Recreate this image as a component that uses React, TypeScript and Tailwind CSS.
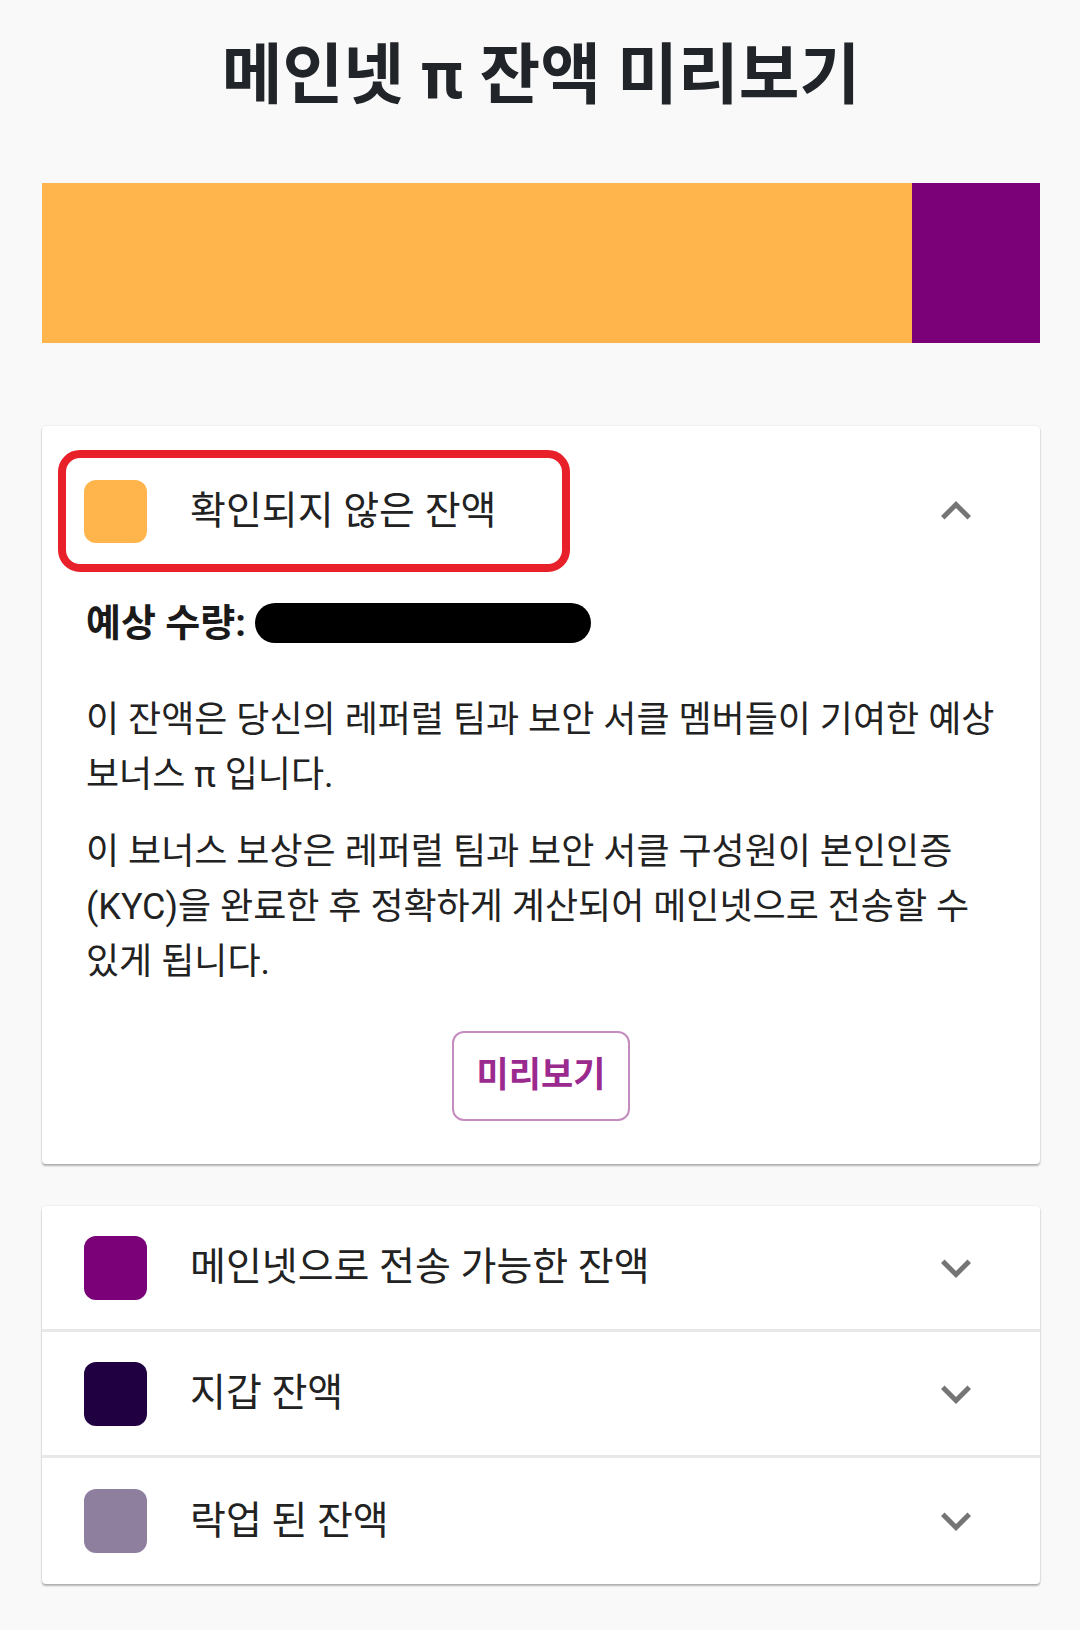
import React from 'react';

const font = { fontFamily: 'Roboto, "Noto Sans CJK KR", sans-serif' };

function ChevronUp() {
  return (
    <svg width="60" height="60" viewBox="0 0 24 24" className="text-[#757575]" fill="currentColor">
      <path d="M12 8l-6 6 1.41 1.41L12 10.83l4.59 4.58L18 14z" />
    </svg>
  );
}

function ChevronDown() {
  return (
    <svg width="60" height="60" viewBox="0 0 24 24" className="text-[#757575]" fill="currentColor">
      <path d="M16.59 8.59L12 13.17 7.41 8.59 6 10l6 6 6-6z" />
    </svg>
  );
}

const rows = [
  { label: '메인넷으로 전송 가능한 잔액', color: 'bg-[#7a0177]', h: 'h-[123px]' },
  { label: '지갑 잔액', color: 'bg-[#200040]', h: 'h-[123px]' },
  { label: '락업 된 잔액', color: 'bg-[#8f7f9f]', h: 'h-[126px]' },
];

export default function App() {
  return (
    <div className="min-h-[1630px] bg-[#f9f9f9] text-[#212121]" style={font}>
      <div className="pl-[42px] pr-[40px] pt-[31px]">
        <h1 className="text-center text-[66px] leading-[90px] font-bold text-[#212529]">
          메인넷 π 잔액 미리보기
        </h1>

        {/* balance bar */}
        <div className="mt-[62px] flex h-[160px]">
          <div className="w-[87.2%] bg-[#ffb54c]"></div>
          <div className="flex-1 bg-[#7a0177]"></div>
        </div>

        {/* expanded card */}
        <div className="relative mt-[83px] rounded-[4px] bg-white shadow-[0_2px_2px_rgba(0,0,0,0.28),0_0_2px_rgba(0,0,0,0.12)]">
          <div className="absolute left-[16px] top-[24px] h-[122px] w-[512px] rounded-[22px] border-[8px] border-[#e8202a]"></div>
          <div className="flex h-[170px] items-center pl-[42px] pr-[54px]">
            <div className="h-[63px] w-[63px] rounded-[12px] bg-[#ffb54c]"></div>
            <div className="ml-[43px] flex-1 text-[39px] text-[#222]">확인되지 않은 잔액</div>
            <ChevronUp />
          </div>
          <div className="pl-[44px] pr-[36px] pb-[43px]">
            <div className="flex items-center text-[38px] leading-[54px] font-bold text-[#1a1a1a]">
              예상 수량:
              <span className="ml-[9px] inline-block h-[40px] w-[336px] rounded-full bg-black"></span>
            </div>
            <p className="mt-[43px] text-[36px] leading-[55px] text-[#222]">
              이 잔액은 당신의 레퍼럴 팀과 보안 서클 멤버들이 기여한 예상 보너스 π 입니다.
            </p>
            <p className="mt-[22px] text-[36px] leading-[55px] text-[#222]">
              이 보너스 보상은 레퍼럴 팀과 보안 서클 구성원이 본인인증 (KYC)을 완료한 후 정확하게 계산되어 메인넷으로 전송할 수 있게 됩니다.
            </p>
            <div className="mt-[41px] flex justify-center pr-[8px]">
              <button className="h-[90px] w-[178px] rounded-[12px] border-2 border-[#c68cc0] bg-white text-[35px] font-bold text-[#9b2a8f]">
                미리보기
              </button>
            </div>
          </div>
        </div>

        {/* collapsed list */}
        <div className="mt-[42px] overflow-hidden rounded-[4px] bg-white shadow-[0_2px_2px_rgba(0,0,0,0.28),0_0_2px_rgba(0,0,0,0.12)]">
          {rows.map((r, i) => (
            <div key={r.label} className={i > 0 ? 'border-t-[3px] border-[#e8e8e8]' : ''}>
              <div className={`flex items-center pl-[42px] pr-[54px] ${r.h}`}>
                <div className={`h-[64px] w-[63px] rounded-[12px] ${r.color}`}></div>
                <div className="ml-[43px] flex-1 text-[39px] text-[#222]">{r.label}</div>
                <ChevronDown />
              </div>
            </div>
          ))}
        </div>
      </div>
    </div>
  );
}
